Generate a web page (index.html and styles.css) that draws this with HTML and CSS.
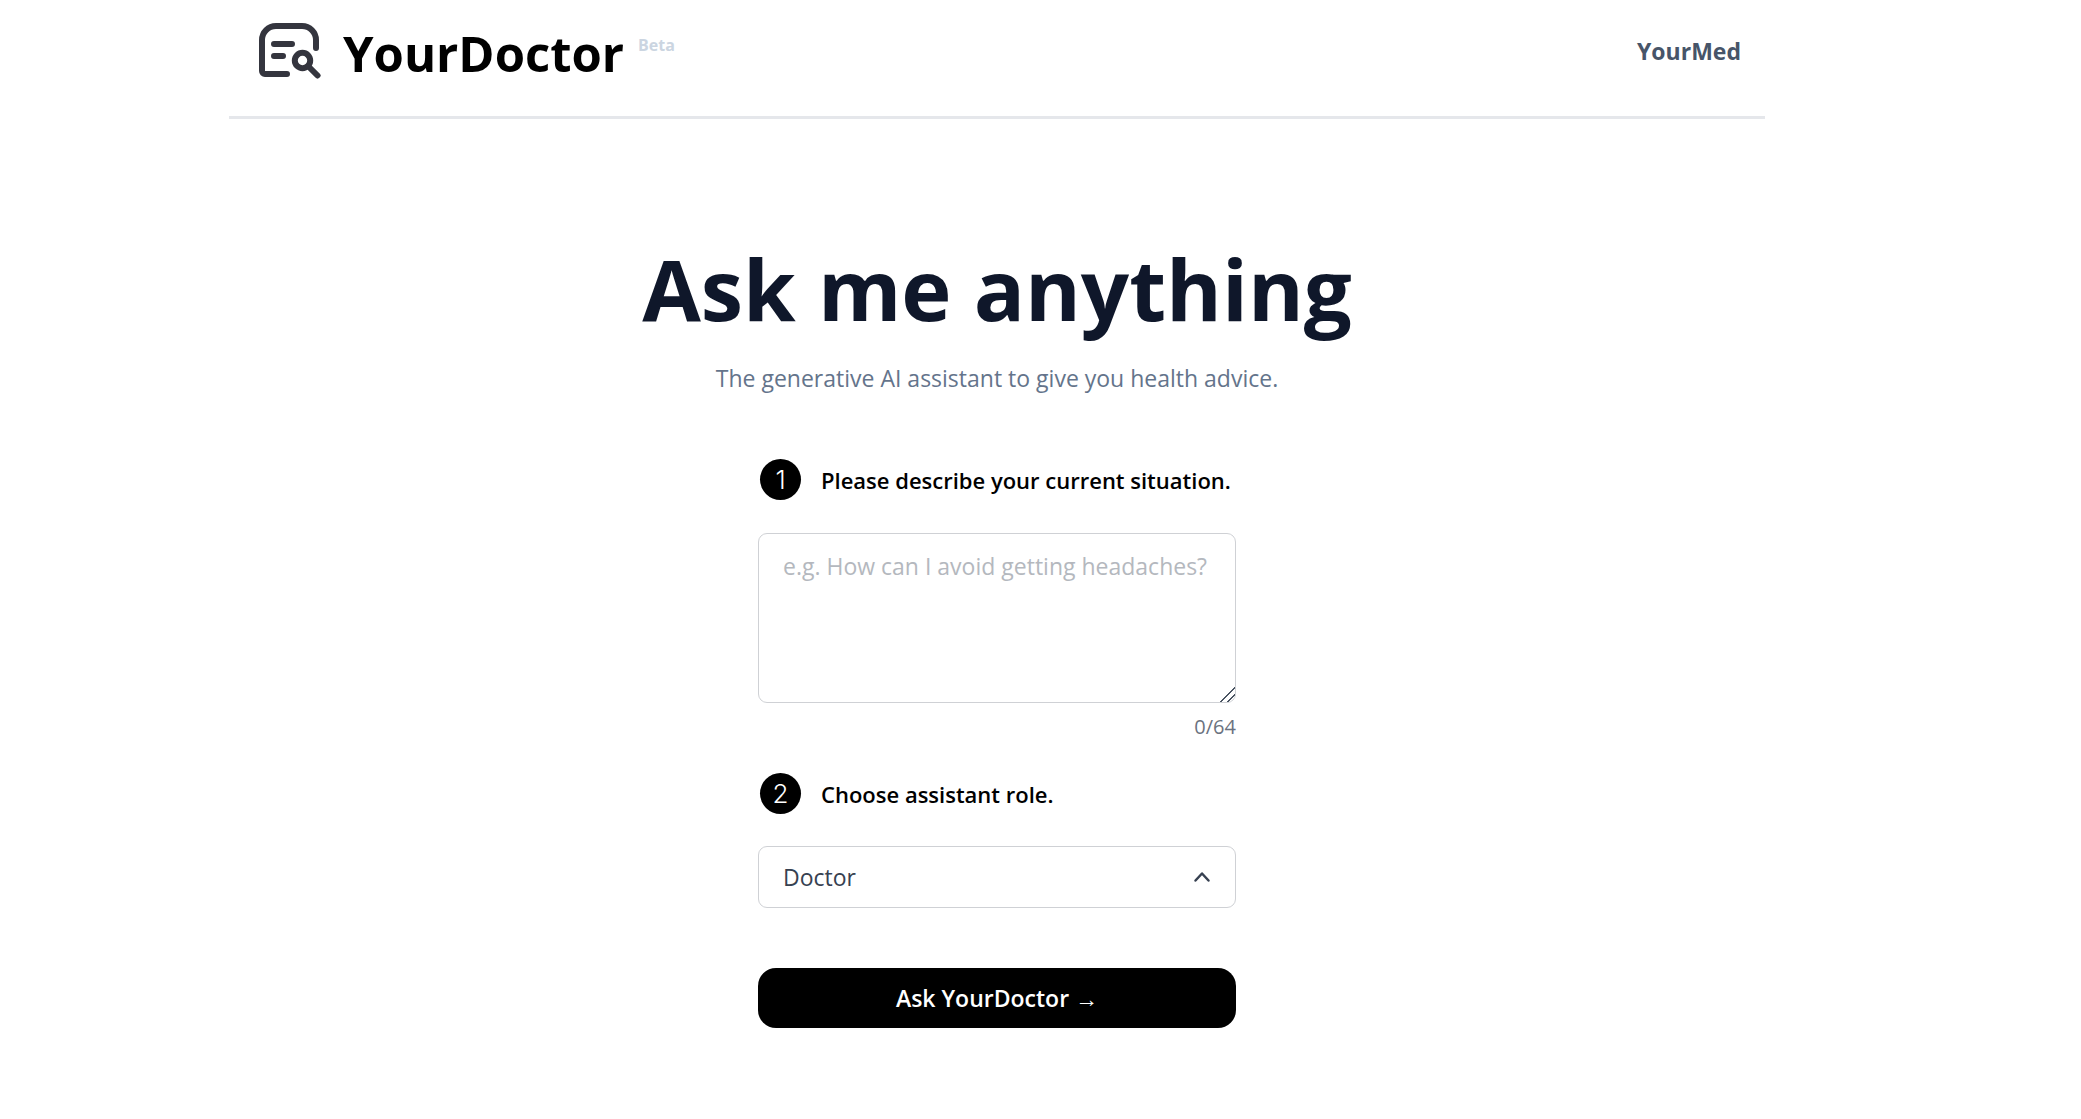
FILE: index.html
```
<!DOCTYPE html>
<html lang="en">
<head>
  <meta charset="UTF-8" />
  <title>YourDoctor</title>
  <link rel="stylesheet" href="styles.css">
</head>
<body>
  <div class="container">
    <header class="header">
      <a class="brand" href="#">
        <svg class="logo" width="62" height="56" viewBox="0 0 62 56" fill="none" stroke="#34353e" stroke-width="6" stroke-linecap="round" stroke-linejoin="round" aria-hidden="true">
          <path d="M57 25V17A14 14 0 0 0 43 3H17A14 14 0 0 0 3 17V48A3 3 0 0 0 6 51H28" />
          <path d="M15 21H33M15 33H24" />
          <circle cx="43.5" cy="37.5" r="7.7" />
          <path d="M49.5 43.5L58.5 52.5" />
        </svg>
        <span class="brand-name">YourDoctor</span>
        <span class="beta">Beta</span>
      </a>
      <a class="nav-link" href="#">YourMed</a>
    </header>

    <main class="main">
      <h1 class="title">Ask me anything</h1>
      <p class="subtitle">The generative AI assistant to give you health advice.</p>

      <form class="form" onsubmit="return false">
        <div class="step">
          <span class="step-number">1</span>
          <label for="situation">Please describe your current situation.</label>
        </div>
        <textarea id="situation" class="field situation" maxlength="64" placeholder="e.g. How can I avoid getting headaches?"></textarea>
        <div class="counter"><span id="count">0</span>/64</div>

        <div class="step">
          <span class="step-number">2</span>
          <label for="role">Choose assistant role.</label>
        </div>
        <div class="select-wrap">
          <select id="role" class="field role">
            <option>Doctor</option>
          </select>
          <svg class="chevron" width="18" height="12" viewBox="0 0 18 12" fill="none" stroke="#374151" stroke-width="2.5" stroke-linecap="round" stroke-linejoin="round" aria-hidden="true">
            <path d="M2.5 9.5L9 2.5L15.5 9.5" />
          </svg>
        </div>

        <button class="submit" type="submit">Ask YourDoctor →</button>
      </form>
    </main>
  </div>

  <script>
    const situation = document.querySelector('#situation');
    situation.addEventListener('input', () => {
      document.querySelector('#count').textContent = situation.value.length;
    });
  </script>
</body>
</html>
```
FILE: styles.css
```
* { box-sizing: border-box; }
body { margin: 0; padding-right: 87px; background: #fff; color: #000; font-family: "Open Sans", "Noto Sans", sans-serif; font-size: 23px; line-height: 32px; }
a { color: inherit; text-decoration: none; }

.container { max-width: 1536px; margin: 0 auto; }

.header { display: flex; justify-content: space-between; align-items: flex-start; height: 119px; padding: 23px 24px 0 30px; border-bottom: 3px solid #e5e7eb; }
.brand { display: flex; align-items: flex-start; }
.brand-name { margin-left: 22px; font-size: 49px; line-height: 60px; font-weight: 700; }
.beta { margin-left: 14px; padding-top: 10px; font-size: 16px; line-height: 24px; font-weight: 700; color: #cbd5e1; }
.nav-link { padding-top: 12px; font-weight: 700; color: #475569; }

.main { display: flex; flex-direction: column; align-items: center; padding-top: 121px; }
.title { margin: 0; font-size: 85px; line-height: 96px; font-weight: 700; color: #0f172a; }
.subtitle { margin: 26px 0 0; color: #64748b; }

.form { width: 100%; max-width: 478px; margin-top: 65px; }
.step { display: flex; align-items: center; gap: 20px; padding-left: 2px; font-size: 22px; font-weight: 600; white-space: nowrap; }
.step-number { display: flex; align-items: center; justify-content: center; flex: none; width: 41px; height: 41px; border-radius: 50%; background: #000; color: #fff; font-family: Inter, sans-serif; font-size: 26px; font-weight: 300; }
.field { display: block; width: 100%; border: 1px solid #cfd1d5; border-radius: 9px; background: #fff; color: #374151; font: inherit; }
.situation { height: 170px; margin-top: 33px; padding: 16px 24px; resize: vertical; }
.situation::placeholder { color: #b4b8be; }
.situation::-webkit-resizer { background: linear-gradient(135deg, transparent 48%, #4b5563 48%, #4b5563 54%, transparent 54%, transparent 73%, #4b5563 73%, #4b5563 79%, transparent 79%); }
.counter { margin: 8px 0 30px; font-size: 20px; text-align: right; color: #6b7280; }

.select-wrap { display: grid; align-items: center; margin-top: 32px; }
.select-wrap > * { grid-area: 1 / 1; }
.role { height: 62px; padding: 0 24px; appearance: none; }
.chevron { justify-self: end; margin-right: 25px; pointer-events: none; }

.submit { width: 100%; height: 60px; margin-top: 60px; border: 0; border-radius: 18px; background: #000; color: #fff; font: inherit; font-weight: 600; cursor: pointer; }
```
